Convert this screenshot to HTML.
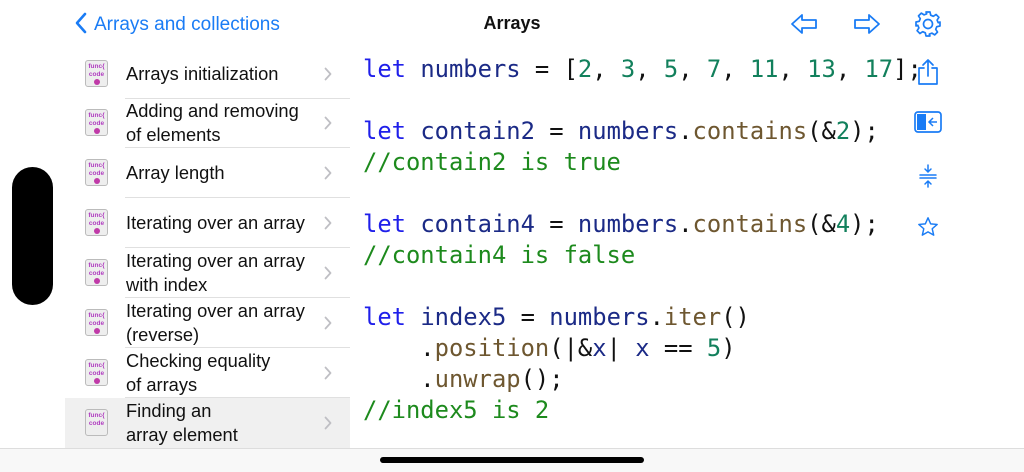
<!DOCTYPE html>
<html><head><meta charset="utf-8"><style>
*{margin:0;padding:0;box-sizing:border-box}
body{width:1024px;height:472px;overflow:hidden;background:#fff;font-family:"Liberation Sans",sans-serif;position:relative}
.a{position:absolute}
.back{left:74px;top:12px;color:#1a7cf5;font-size:19px}
.title{left:0;width:1024px;text-align:center;top:13px;font-size:18px;font-weight:bold;color:#111}
.row{position:absolute;left:65px;width:285px;height:50px}
.row .ic{position:absolute;left:20px;top:11px;width:23px;height:27px;background:#eee;border:1px solid #bbb;border-radius:3px;font-size:6.5px;line-height:8px;color:#b03cc0;text-align:center;padding-top:2px;font-weight:bold}
.row .ic i{display:block;width:6px;height:6px;border-radius:50%;background:#c03aa8;margin:0 auto}
.row .t{position:absolute;left:61px;top:0;height:50px;display:flex;align-items:center;font-size:18.3px;line-height:24px;color:#111}
.row .ch{position:absolute;right:18px;top:18px}
.row .sep{position:absolute;left:60px;right:0;bottom:0;height:1px;background:#e0e0e0}
.code{left:363px;top:54px;font-family:"DejaVu Sans Mono","Liberation Mono",monospace;font-size:23.8px;line-height:31px;white-space:pre;color:#111}
.k{color:#1f1fea}.v{color:#1b2a86}.m{color:#6e5730}.n{color:#12805c}.c{color:#1d8a1d}
</style></head><body>
<div class="a back"><svg width="14" height="22" viewBox="0 0 14 22" style="vertical-align:-4px;margin-right:6px"><path d="M11 2 L3 11 L11 20" fill="none" stroke="#1a7cf5" stroke-width="2.6" stroke-linecap="round" stroke-linejoin="round"/></svg>Arrays and collections</div>
<div class="a title">Arrays</div>
<svg class="a" style="left:790px;top:12px" width="28" height="24" viewBox="0 0 28 24"><path d="M2 12 L12 3 V8 H26 V16 H12 V21 Z" fill="none" stroke="#1a7cf5" stroke-width="1.8" stroke-linejoin="round"/></svg>
<svg class="a" style="left:853px;top:12px" width="28" height="24" viewBox="0 0 28 24"><path d="M26 12 L16 3 V8 H2 V16 H16 V21 Z" fill="none" stroke="#1a7cf5" stroke-width="1.8" stroke-linejoin="round"/></svg>
<svg class="a" style="left:914px;top:10px" width="28" height="28" viewBox="0 0 28 28"><g fill="none" stroke="#1a7cf5" stroke-width="1.7"><circle cx="14" cy="14" r="4.5"/><path d="M12 2h4l.7 3.2 2.6 1.1 2.8-1.8 2.8 2.8-1.8 2.8 1.1 2.6L26 12v4l-3.2.7-1.1 2.6 1.8 2.8-2.8 2.8-2.8-1.8-2.6 1.1L16 26h-4l-.7-3.2-2.6-1.1-2.8 1.8-2.8-2.8 1.8-2.8-1.1-2.6L2 16v-4l3.2-.7 1.1-2.6-1.8-2.8 2.8-2.8 2.8 1.8 2.6-1.1z" stroke-linejoin="round"/></g></svg>
<svg class="a" style="left:916px;top:58px" width="24" height="28" viewBox="0 0 24 28"><g fill="none" stroke="#1a7cf5" stroke-width="1.7" stroke-linecap="round" stroke-linejoin="round"><path d="M8 10H3v16h18V10h-5"/><path d="M12 18V2M7 7l5-5 5 5"/></g></svg>
<svg class="a" style="left:914px;top:111px" width="28" height="22" viewBox="0 0 28 22"><rect x="1" y="1" width="26" height="20" rx="3" fill="none" stroke="#1a7cf5" stroke-width="1.7"/><rect x="3" y="3" width="9" height="16" fill="#1a7cf5"/><path d="M23 11h-7M19 7l-4 4 4 4" fill="none" stroke="#1a7cf5" stroke-width="1.5"/></svg>
<svg class="a" style="left:918px;top:164px" width="20" height="24" viewBox="0 0 20 24"><g fill="none" stroke="#1a7cf5" stroke-width="1.5" stroke-linecap="round"><path d="M2 11h16M2 14h16M10 1v7M7 5l3 3 3-3M10 23v-6M7 20l3-3 3 3"/></g></svg>
<svg class="a" style="left:917px;top:216px" width="22" height="22" viewBox="0 0 24 24"><path d="M12 2l2.9 6.6 7.1.6-5.4 4.7 1.6 7L12 17.3 5.8 20.9l1.6-7L2 9.2l7.1-.6z" fill="none" stroke="#1a7cf5" stroke-width="1.6" stroke-linejoin="round"/></svg>

<div class="a" style="left:12px;top:167px;width:41px;height:138px;background:#000;border-radius:21px"></div>

<div class="row" style="top:49px"><div class="ic">func{<br>code<i></i></div><div class="t">Arrays initialization</div><svg class="ch" width="8" height="14" viewBox="0 0 8 14"><path d="M1.5 1.5 L6.5 7 L1.5 12.5" fill="none" stroke="#bfbfc4" stroke-width="1.8" stroke-linecap="round" stroke-linejoin="round"/></svg><div class="sep"></div></div>
<div class="row" style="top:98px"><div class="ic">func{<br>code<i></i></div><div class="t">Adding and removing<br>of elements</div><svg class="ch" width="8" height="14" viewBox="0 0 8 14"><path d="M1.5 1.5 L6.5 7 L1.5 12.5" fill="none" stroke="#bfbfc4" stroke-width="1.8" stroke-linecap="round" stroke-linejoin="round"/></svg><div class="sep"></div></div>
<div class="row" style="top:148px"><div class="ic">func{<br>code<i></i></div><div class="t">Array length</div><svg class="ch" width="8" height="14" viewBox="0 0 8 14"><path d="M1.5 1.5 L6.5 7 L1.5 12.5" fill="none" stroke="#bfbfc4" stroke-width="1.8" stroke-linecap="round" stroke-linejoin="round"/></svg><div class="sep"></div></div>
<div class="row" style="top:198px"><div class="ic">func{<br>code<i></i></div><div class="t">Iterating over an array</div><svg class="ch" width="8" height="14" viewBox="0 0 8 14"><path d="M1.5 1.5 L6.5 7 L1.5 12.5" fill="none" stroke="#bfbfc4" stroke-width="1.8" stroke-linecap="round" stroke-linejoin="round"/></svg><div class="sep"></div></div>
<div class="row" style="top:248px"><div class="ic">func{<br>code<i></i></div><div class="t">Iterating over an array<br>with index</div><svg class="ch" width="8" height="14" viewBox="0 0 8 14"><path d="M1.5 1.5 L6.5 7 L1.5 12.5" fill="none" stroke="#bfbfc4" stroke-width="1.8" stroke-linecap="round" stroke-linejoin="round"/></svg><div class="sep"></div></div>
<div class="row" style="top:298px"><div class="ic">func{<br>code<i></i></div><div class="t">Iterating over an array<br>(reverse)</div><svg class="ch" width="8" height="14" viewBox="0 0 8 14"><path d="M1.5 1.5 L6.5 7 L1.5 12.5" fill="none" stroke="#bfbfc4" stroke-width="1.8" stroke-linecap="round" stroke-linejoin="round"/></svg><div class="sep"></div></div>
<div class="row" style="top:348px"><div class="ic">func{<br>code<i></i></div><div class="t">Checking equality<br>of arrays</div><svg class="ch" width="8" height="14" viewBox="0 0 8 14"><path d="M1.5 1.5 L6.5 7 L1.5 12.5" fill="none" stroke="#bfbfc4" stroke-width="1.8" stroke-linecap="round" stroke-linejoin="round"/></svg><div class="sep"></div></div>
<div class="row" style="top:398px;background:#f0f0f0"><div class="ic">func{<br>code</div><div class="t">Finding an<br>array element</div><svg class="ch" width="8" height="14" viewBox="0 0 8 14"><path d="M1.5 1.5 L6.5 7 L1.5 12.5" fill="none" stroke="#bfbfc4" stroke-width="1.8" stroke-linecap="round" stroke-linejoin="round"/></svg></div>

<div class="a code"><span class="k">let</span> <span class="v">numbers</span> = [<span class="n">2</span>, <span class="n">3</span>, <span class="n">5</span>, <span class="n">7</span>, <span class="n">11</span>, <span class="n">13</span>, <span class="n">17</span>];

<span class="k">let</span> <span class="v">contain2</span> = <span class="v">numbers</span>.<span class="m">contains</span>(&amp;<span class="n">2</span>);
<span class="c">//contain2 is true</span>

<span class="k">let</span> <span class="v">contain4</span> = <span class="v">numbers</span>.<span class="m">contains</span>(&amp;<span class="n">4</span>);
<span class="c">//contain4 is false</span>

<span class="k">let</span> <span class="v">index5</span> = <span class="v">numbers</span>.<span class="m">iter</span>()
    .<span class="m">position</span>(|&amp;<span class="v">x</span>| <span class="v">x</span> == <span class="n">5</span>)
    .<span class="m">unwrap</span>();
<span class="c">//index5 is 2</span></div>

<div class="a" style="left:0;top:448px;width:1024px;height:24px;background:#f8f8f8;border-top:1px solid #ddd"></div>
<div class="a" style="left:380px;top:457px;width:264px;height:6px;background:#000;border-radius:3px"></div>
</body></html>
